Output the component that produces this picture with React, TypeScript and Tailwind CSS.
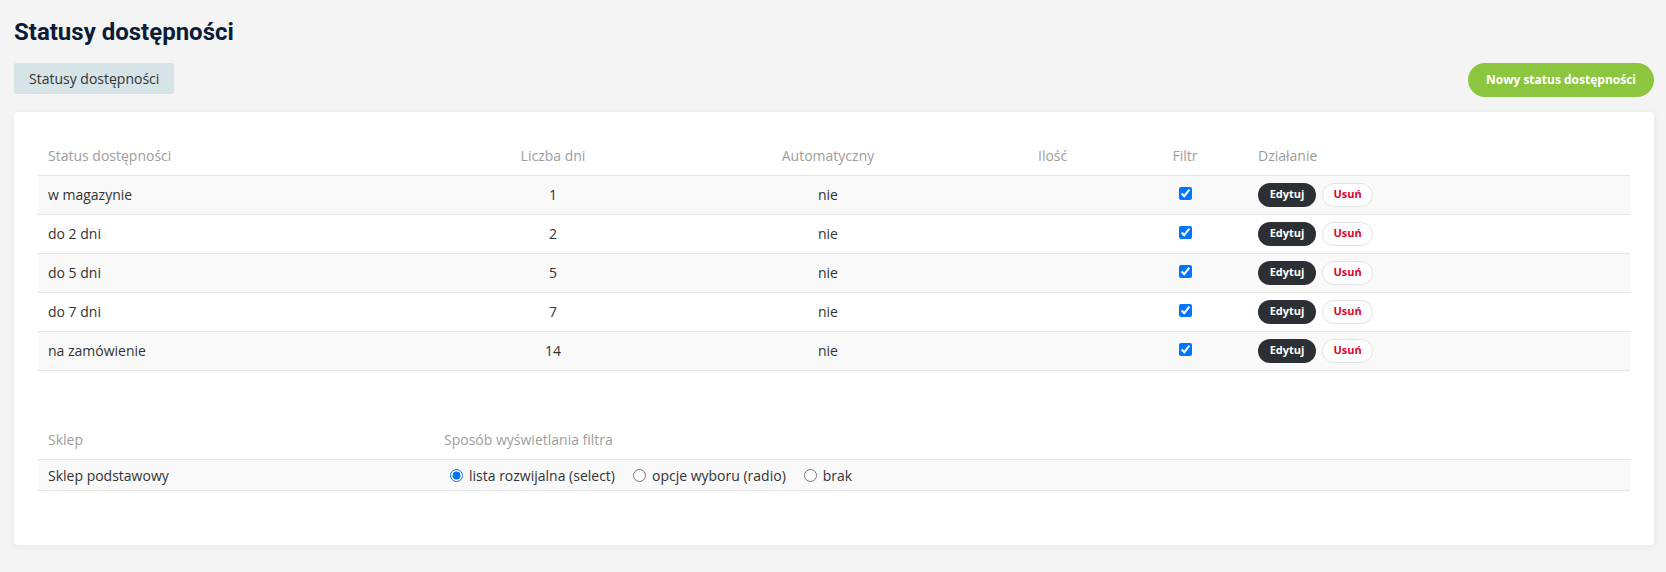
import React from "react";

const rows = [
  { name: "w magazynie", days: 1 },
  { name: "do 2 dni", days: 2 },
  { name: "do 5 dni", days: 5 },
  { name: "do 7 dni", days: 7 },
  { name: "na zamówienie", days: 14 },
];

const Radio = ({ label, checked }: { label: string; checked?: boolean }) => (
  <label className="flex items-center gap-[6px]">
    <input type="radio" name="filter" defaultChecked={checked} className="m-0 h-[13px] w-[13px] accent-[#0075ff]" />
    <span>{label}</span>
  </label>
);

export default function App() {
  return (
    <div
      className="min-h-[572px] bg-[#f4f4f4] pl-[14px] pr-[12px] pt-[18px] pb-[27px] text-[14px] text-[#333]"
      style={{ fontFamily: '"Open Sans", "Noto Sans", sans-serif' }}
    >
      <h1
        className="text-[24px] leading-[29px] font-bold text-[#0a1c36]"
        style={{ fontFamily: "Roboto, sans-serif" }}
      >
        Statusy dostępności
      </h1>

      <div className="mt-[16px] flex items-start justify-between">
        <div className="flex h-[31px] items-center rounded-[2px] bg-[#d7e4e7] px-[15px] text-[#333]">
          Statusy dostępności
        </div>
        <button className="h-[34px] rounded-full bg-[#8cc63f] px-[18px] text-[12px] font-bold text-white">
          Nowy status dostępności
        </button>
      </div>

      <div className="mt-[15px] rounded-[4px] bg-white px-[24px] pt-[24px] pb-[54px] shadow-[0_1px_6px_rgba(0,0,0,0.06)]">
        <table className="w-full table-fixed border-collapse">
          <colgroup>
            <col className="w-[440px]" />
            <col className="w-[150px]" />
            <col className="w-[400px]" />
            <col className="w-[94px]" />
            <col className="w-[126px]" />
            <col />
          </colgroup>
          <thead>
            <tr className="h-[39px] border-b border-[#e4e4e4] text-[#9d9d9d]">
              <th className="px-[10px] text-left font-normal">Status dostępności</th>
              <th className="px-[10px] text-center font-normal">Liczba dni</th>
              <th className="px-[10px] text-center font-normal">Automatyczny</th>
              <th className="px-[10px] text-left font-normal">Ilość</th>
              <th className="px-[10px] text-center font-normal">Filtr</th>
              <th className="px-[10px] text-left font-normal">Działanie</th>
            </tr>
          </thead>
          <tbody>
            {rows.map((r, i) => (
              <tr
                key={r.name}
                className={`h-[39px] border-b border-[#e4e4e4] ${i % 2 === 0 ? "bg-[#f9f9f9]" : "bg-white"}`}
              >
                <td className="px-[10px]">{r.name}</td>
                <td className="px-[10px] text-center">{r.days}</td>
                <td className="px-[10px] text-center">nie</td>
                <td className="px-[10px]"></td>
                <td className="px-[10px]">
                  <div className="flex justify-center pb-[2px]">
                    <input type="checkbox" defaultChecked className="m-0 h-[13px] w-[13px] accent-[#0075ff]" />
                  </div>
                </td>
                <td className="px-[10px]">
                  <div className="flex items-center gap-[6px]">
                    <button className="h-[24px] w-[58px] rounded-full bg-[#2c3035] text-[11px] font-bold text-white">
                      Edytuj
                    </button>
                    <button className="h-[24px] w-[51px] rounded-full border border-[#e2e2e2] bg-white text-[11px] font-bold text-[#d9042b]">
                      Usuń
                    </button>
                  </div>
                </td>
              </tr>
            ))}
          </tbody>
        </table>

        <table className="mt-[50px] w-full table-fixed border-collapse">
          <colgroup>
            <col className="w-[396px]" />
            <col />
          </colgroup>
          <thead>
            <tr className="h-[39px] border-b border-[#e4e4e4] text-[#9d9d9d]">
              <th className="px-[10px] text-left font-normal">Sklep</th>
              <th className="px-[10px] text-left font-normal">Sposób wyświetlania filtra</th>
            </tr>
          </thead>
          <tbody>
            <tr className="h-[31px] border-b border-[#e4e4e4] bg-[#f9f9f9]">
              <td className="px-[10px]">Sklep podstawowy</td>
              <td className="px-[10px]">
                <div className="flex items-center gap-[18px] pl-[6px]">
                  <Radio label="lista rozwijalna (select)" checked />
                  <Radio label="opcje wyboru (radio)" />
                  <Radio label="brak" />
                </div>
              </td>
            </tr>
          </tbody>
        </table>
      </div>
    </div>
  );
}
